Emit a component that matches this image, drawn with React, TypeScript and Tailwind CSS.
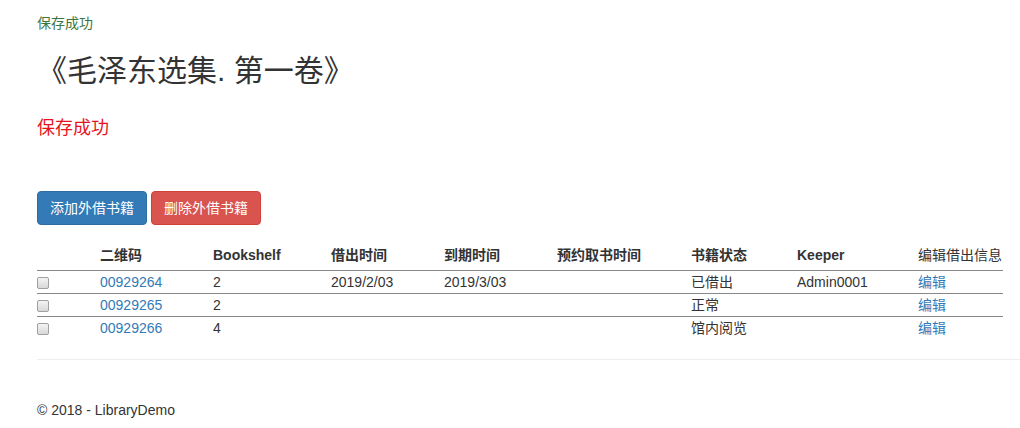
import React from "react";

const font = "font-['Liberation_Sans','Noto_Sans_CJK_SC',sans-serif]";

const rows = [
  { code: "00929264", shelf: "2", out: "2019/2/03", due: "2019/3/03", reserve: "", status: "已借出", keeper: "Admin0001" },
  { code: "00929265", shelf: "2", out: "", due: "", reserve: "", status: "正常", keeper: "" },
  { code: "00929266", shelf: "4", out: "", due: "", reserve: "", status: "馆内阅览", keeper: "" },
];

const widths = [63, 113, 118, 113, 113, 134, 106, 121, 85];

function Checkbox() {
  return (
    <span className="mt-[5px] block h-[12px] w-[12px] rounded-[2px] border border-[#a0a0a0] bg-gradient-to-b from-[#f4f4f4] to-[#d8d8d8]" />
  );
}

export default function App() {
  return (
    <div className={`${font} min-h-[428px] w-[1020px] bg-white text-[14px] leading-[20px] text-[#333]`}>
      <div className="pl-[37px]">
        <p className="pt-[13px] text-[14px] leading-[20px] text-[#3c763d]">保存成功</p>
        <h2 className="mt-[21px] text-[30px] leading-[33px] font-normal text-[#333]">《毛泽东选集. 第一卷》</h2>
        <p className="mt-[28px] text-[18px] leading-[26px] text-[#e8141b]">保存成功</p>

        <div className="mt-[50px] flex gap-[4px]">
          <button className="h-[34px] w-[110px] rounded-[4px] border border-[#2e6da4] bg-[#337ab7] text-[14px] text-white">
            添加外借书籍
          </button>
          <button className="h-[34px] w-[110px] rounded-[4px] border border-[#d43f3a] bg-[#d9534f] text-[14px] text-white">
            删除外借书籍
          </button>
        </div>

        <table className="mt-[20px] table-fixed border-collapse" style={{ width: 966 }}>
          <colgroup>
            {widths.map((w, i) => (
              <col key={i} style={{ width: w }} />
            ))}
          </colgroup>
          <thead>
            <tr className="h-[25px] border-b border-[#888] text-left align-top">
              <th />
              <th className="font-bold">二维码</th>
              <th className="font-bold">Bookshelf</th>
              <th className="font-bold">借出时间</th>
              <th className="font-bold">到期时间</th>
              <th className="font-bold">预约取书时间</th>
              <th className="font-bold">书籍状态</th>
              <th className="font-bold">Keeper</th>
              <th className="font-normal">编辑借出信息</th>
            </tr>
          </thead>
          <tbody>
            {rows.map((r, i) => (
              <tr
                key={r.code}
                className={`h-[23px] align-top ${i < rows.length - 1 ? "border-b border-[#888]" : ""}`}
              >
                <td className="pt-px">
                  <Checkbox />
                </td>
                <td className="pt-px text-[#337ab7]">{r.code}</td>
                <td className="pt-px">{r.shelf}</td>
                <td className="pt-px">{r.out}</td>
                <td className="pt-px">{r.due}</td>
                <td className="pt-px">{r.reserve}</td>
                <td className="pt-px">{r.status}</td>
                <td className="pt-px">{r.keeper}</td>
                <td className="pt-px text-[#337ab7]">编辑</td>
              </tr>
            ))}
          </tbody>
        </table>

        <hr className="mt-[20px] border-0 border-t border-[#eee]" />
        <footer className="mt-[40px] text-[14px] leading-[20px]">© 2018 - LibraryDemo</footer>
      </div>
    </div>
  );
}
